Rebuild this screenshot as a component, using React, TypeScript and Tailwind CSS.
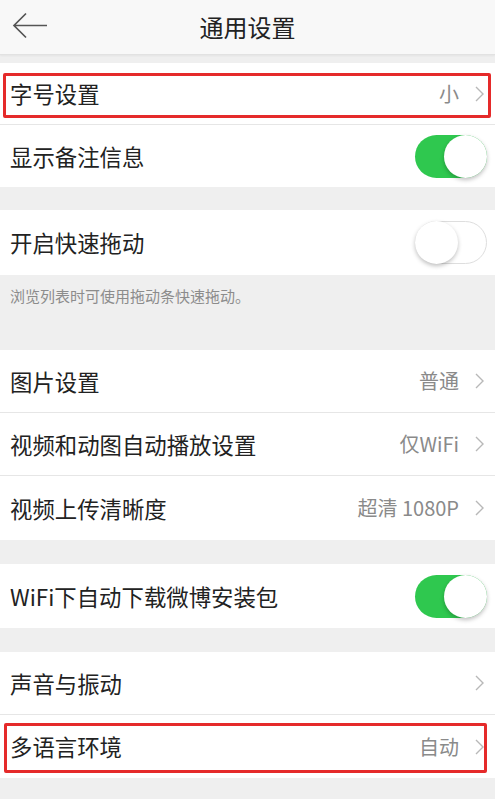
import type { ReactNode } from 'react';

const FONT = { fontFamily: '"Noto Sans CJK SC", "Noto Sans", sans-serif' };

// Thin right chevron used on navigable rows.
function Chevron() {
  return (
    <svg width="9" height="16" viewBox="0 0 9 16" className="ml-[16px] mr-[3px] shrink-0">
      <path d="M1 1 L8 8 L1 15" fill="none" stroke="#b8b8b8" strokeWidth="1.4" />
    </svg>
  );
}

// iOS-style switch.
function Toggle({ on }: { on: boolean }) {
  return on ? (
    <div className="relative h-[43px] w-[72px] shrink-0 rounded-full bg-[#2fc84f]">
      <div className="absolute right-0 top-0 h-[43px] w-[43px] rounded-full bg-white shadow-[0_2px_4px_rgba(0,0,0,0.25)]" />
    </div>
  ) : (
    <div className="relative h-[43px] w-[72px] shrink-0 rounded-full border border-[#dedede] bg-white">
      <div className="absolute -left-px -top-px h-[43px] w-[43px] rounded-full bg-white shadow-[0_2px_4px_rgba(0,0,0,0.25)]" />
    </div>
  );
}

interface RowProps {
  label: string;
  value?: string;
  chevron?: boolean;
  toggle?: boolean;
  height: string;
  divider?: boolean;
  highlight?: ReactNode;
}

function Row({ label, value, chevron, toggle, height, divider, highlight }: RowProps) {
  return (
    <div className={`relative flex items-center bg-white pl-[10px] pr-[8px] ${height} ${divider ? 'border-b border-[#e6e6e6]' : ''}`}>
      <span className="flex-1 text-[22.4px] leading-none text-[#222]">{label}</span>
      {value && <span className="text-[20px] leading-none text-[#8a8a8a]">{value}</span>}
      {chevron && <Chevron />}
      {toggle !== undefined && <Toggle on={toggle} />}
      {highlight}
    </div>
  );
}

export default function App() {
  return (
    <div className="min-h-[799px] w-[495px] overflow-hidden bg-[#efefef]" style={FONT}>
      <header className="relative flex h-[55px] items-center justify-center border-b border-[#e2e2e2] bg-[#f8f8f8] shadow-[0_1px_2px_rgba(0,0,0,0.05)]">
        <svg width="36" height="27" viewBox="0 0 36 27" className="absolute left-[12px] top-[12px]">
          <path d="M35 13.5 H2 M14 1.5 L2 13.5 L14 25.5" fill="none" stroke="#555" strokeWidth="1.7" />
        </svg>
        <h1 className="text-[24px] font-normal leading-none text-[#222]">通用设置</h1>
      </header>

      <div className="mt-[8px]">
        <Row
          label="字号设置"
          value="小"
          chevron
          height="h-[62px]"
          divider
          highlight={<div className="absolute bottom-[6px] left-[3px] right-[4px] top-[10px] rounded-[2px] border-[3px] border-[#e52a2a]" />}
        />
        <Row label="显示备注信息" toggle height="h-[62px]" />
      </div>

      <div className="mt-[23px]">
        <Row label="开启快速拖动" toggle={false} height="h-[65px]" />
      </div>
      <div className="h-[75px] pl-[10px] pt-[12px] text-[15px] leading-[18px] text-[#8c8c8c]">浏览列表时可使用拖动条快速拖动。</div>

      <div>
        <Row label="图片设置" value="普通" chevron height="h-[63px]" divider />
        <Row label="视频和动图自动播放设置" value="仅WiFi" chevron height="h-[63px]" divider />
        <Row label="视频上传清晰度" value="超清 1080P" chevron height="h-[64px]" />
      </div>

      <div className="mt-[24px]">
        <Row label="WiFi下自动下载微博安装包" toggle height="h-[64px]" />
      </div>

      <div className="mt-[24px]">
        <Row label="声音与振动" chevron height="h-[63px]" divider />
        <Row
          label="多语言环境"
          value="自动"
          chevron
          height="h-[63px]"
          highlight={<div className="absolute bottom-[5px] left-[4px] right-[8px] top-[8px] rounded-[2px] border-[3px] border-[#e52a2a]" />}
        />
      </div>
    </div>
  );
}
